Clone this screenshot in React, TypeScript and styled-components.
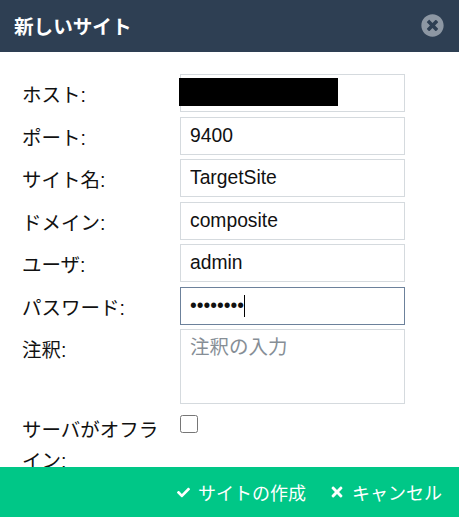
import React from "react";
import styled, { createGlobalStyle } from "styled-components";
import { FaCheck, FaTimes, FaTimesCircle } from "react-icons/fa";

const GlobalStyle = createGlobalStyle`
	html, body {
		margin: 0;
		padding: 0;
		height: 100%;
		background: #fff;
		overflow: hidden;
	}
`;

const fontStack = `"Liberation Sans", "Noto Sans CJK JP", sans-serif`;

const App: React.FC = () => {
	return (
		<Dialog>
			<GlobalStyle />
			<Header>
				<Title>新しいサイト</Title>
				<CloseIcon />
			</Header>
			<Body>
				<Form>
					<Label>ホスト:</Label>
					<Field>
						<TextInput readOnly defaultValue="" />
						<Redaction />
					</Field>
					<Label>ポート:</Label>
					<Field>
						<TextInput readOnly defaultValue="9400" />
					</Field>
					<Label>サイト名:</Label>
					<Field>
						<TextInput readOnly defaultValue="TargetSite" />
					</Field>
					<Label>ドメイン:</Label>
					<Field>
						<TextInput readOnly defaultValue="composite" />
					</Field>
					<Label>ユーザ:</Label>
					<Field>
						<TextInput readOnly defaultValue="admin" />
					</Field>
					<Label>パスワード:</Label>
					<Field>
						<TextInput $focused readOnly type="password" defaultValue="password" />
						<Caret />
					</Field>
					<Label>注釈:</Label>
					<Field>
						<Notes readOnly placeholder="注釈の入力" />
					</Field>
					<Label>サーバがオフライン:</Label>
					<Field>
						<Offline type="checkbox" />
					</Field>
				</Form>
			</Body>
			<Footer>
				<FooterButton>
					<CheckIcon />
					サイトの作成
				</FooterButton>
				<FooterButton>
					<CancelIcon />
					キャンセル
				</FooterButton>
			</Footer>
		</Dialog>
	);
};

export default App;

const Dialog = styled.div`
	display: flex;
	flex-direction: column;
	width: 459px;
	height: 517px;
	overflow: hidden;
	font-family: ${fontStack};
	color: #111;
`;
const Header = styled.div`
	display: flex;
	flex-shrink: 0;
	justify-content: space-between;
	align-items: center;
	height: 52px;
	padding: 0 15px 1px 14px;
	box-sizing: border-box;
	background: #2e3f53;
`;
const Title = styled.div`
	color: #fff;
	font-size: 19.6px;
	font-weight: 700;
`;
const CloseIcon = styled(FaTimesCircle)`
	width: 23px;
	height: 23px;
	color: #8d97a3;
`;
const Body = styled.div`
	flex: 1;
	min-height: 0;
	overflow: hidden;
	padding: 22px 54px 0 22px;
`;
const Form = styled.div`
	display: grid;
	grid-template-columns: 158px 225px;
	grid-auto-rows: min-content;
	row-gap: 4.5px;
`;
const Label = styled.div`
	height: 38px;
	padding: 6px 16px 0 0;
	box-sizing: border-box;
	font-size: 19.5px;
	line-height: 31px;
`;
const Field = styled.div`
	position: relative;
	display: flex;
	align-items: flex-start;
`;
const TextInput = styled.input<{ $focused?: boolean }>`
	width: 100%;
	height: 38px;
	padding: 0 9px;
	box-sizing: border-box;
	border: 1px solid ${(p) => (p.$focused ? "#6c819b" : "#d5dade")};
	border-radius: 0;
	outline: none;
	background: #fff;
	color: #111;
	font-family: ${fontStack};
	font-size: 19.3px;
`;
const Redaction = styled.div`
	position: absolute;
	top: 4px;
	left: -1px;
	width: 159px;
	height: 28px;
	background: #000;
`;
const Caret = styled.div`
	position: absolute;
	top: 8px;
	left: 64px;
	width: 1px;
	height: 22px;
	background: #000;
`;
const Notes = styled.textarea`
	display: block;
	width: 100%;
	height: 75px;
	padding: 3px 9px;
	box-sizing: border-box;
	border: 1px solid #d5dade;
	border-radius: 0;
	outline: none;
	resize: none;
	font-family: ${fontStack};
	font-size: 19.5px;
	line-height: 29px;

	&::placeholder {
		color: #868e96;
		opacity: 1;
	}
`;
const Offline = styled.input`
	width: 18px;
	height: 18px;
	margin: 6px 0 0 0;
`;
const Footer = styled.div`
	display: flex;
	flex-shrink: 0;
	justify-content: flex-end;
	align-items: center;
	gap: 25px;
	height: 50px;
	padding: 0 17px 0 0;
	box-sizing: border-box;
	background: #00c787;
`;
const FooterButton = styled.div`
	display: flex;
	align-items: center;
	gap: 8px;
	color: #fff;
	font-size: 18px;
`;
const CheckIcon = styled(FaCheck)`
	width: 13px;
	height: 13px;
`;
const CancelIcon = styled(FaTimes)`
	width: 16px;
	height: 16px;
	margin: 0 -1px 0 -2px;
`;
